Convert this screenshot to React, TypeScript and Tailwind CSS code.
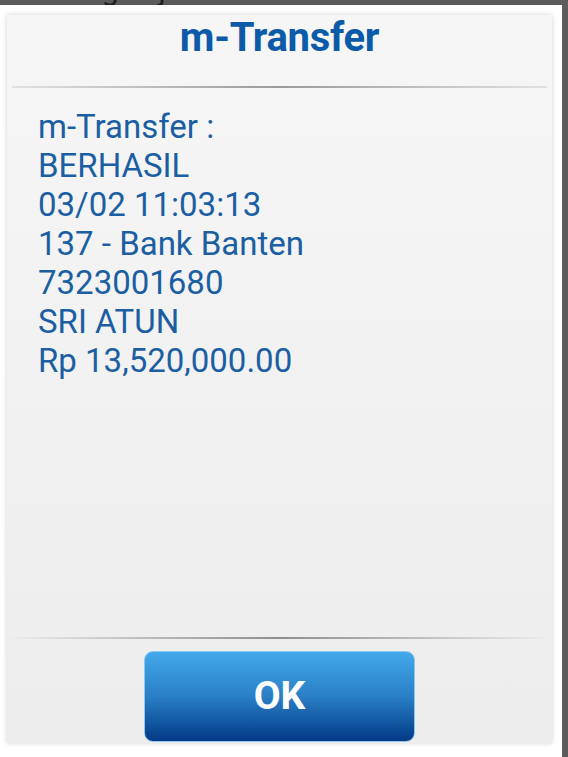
import React from "react";

const lines = [
  "m-Transfer :",
  "BERHASIL",
  "03/02 11:03:13",
  "137 - Bank Banten",
  "7323001680",
  "SRI ATUN",
  "Rp 13,520,000.00",
];

export default function App() {
  return (
    <div
      className="relative w-[568px] h-[757px] overflow-hidden bg-[#5c5c5c]"
      style={{ fontFamily: "Roboto, 'Noto Sans', sans-serif" }}
    >
      <div className="absolute left-[-4px] top-[-26px] text-[30px] leading-[32px] text-[#1e1e1e] whitespace-nowrap">
        Rekening Tujuan:
      </div>
      <div className="absolute left-0 top-[5px] w-[562px] h-[760px] bg-white pl-[7px] pt-[10px]">
        <div className="w-[545px] h-[728px] flex flex-col bg-gradient-to-b from-[#f6f6f6] to-[#ededed] shadow-[0_0_5px_rgba(0,0,0,0.18)]">
          <div className="h-[71px] flex justify-center">
            <div className="text-[40px] leading-[46px] font-bold text-[#0b5ba8] tracking-[-0.3px]">
              m-Transfer
            </div>
          </div>
          <div className="mx-[5px] h-[2px] bg-gradient-to-r from-[#e2e2e2] via-[#9a9a9a] to-[#e2e2e2]" />
          <div className="flex-1 flex flex-col pl-[31px] pt-[19px]">
            {lines.map((l) => (
              <div
                key={l}
                className="text-[33px] leading-[39px] text-[#1b5fa2] whitespace-nowrap"
              >
                {l}
              </div>
            ))}
          </div>
          <div className="mx-[5px] h-[2px] bg-gradient-to-r from-[#ececec] via-[#8e8e8e] to-[#ececec]" />
          <div className="h-[104px] flex justify-center pt-[12px]">
            <div className="w-[271px] h-[91px] rounded-[9px] border border-[#8fc8ee] bg-gradient-to-b from-[#43a9ea] via-[#2a7fc6] to-[#043a86] flex items-center justify-center">
              <span className="text-[39px] font-bold text-white leading-none">OK</span>
            </div>
          </div>
        </div>
      </div>
    </div>
  );
}
